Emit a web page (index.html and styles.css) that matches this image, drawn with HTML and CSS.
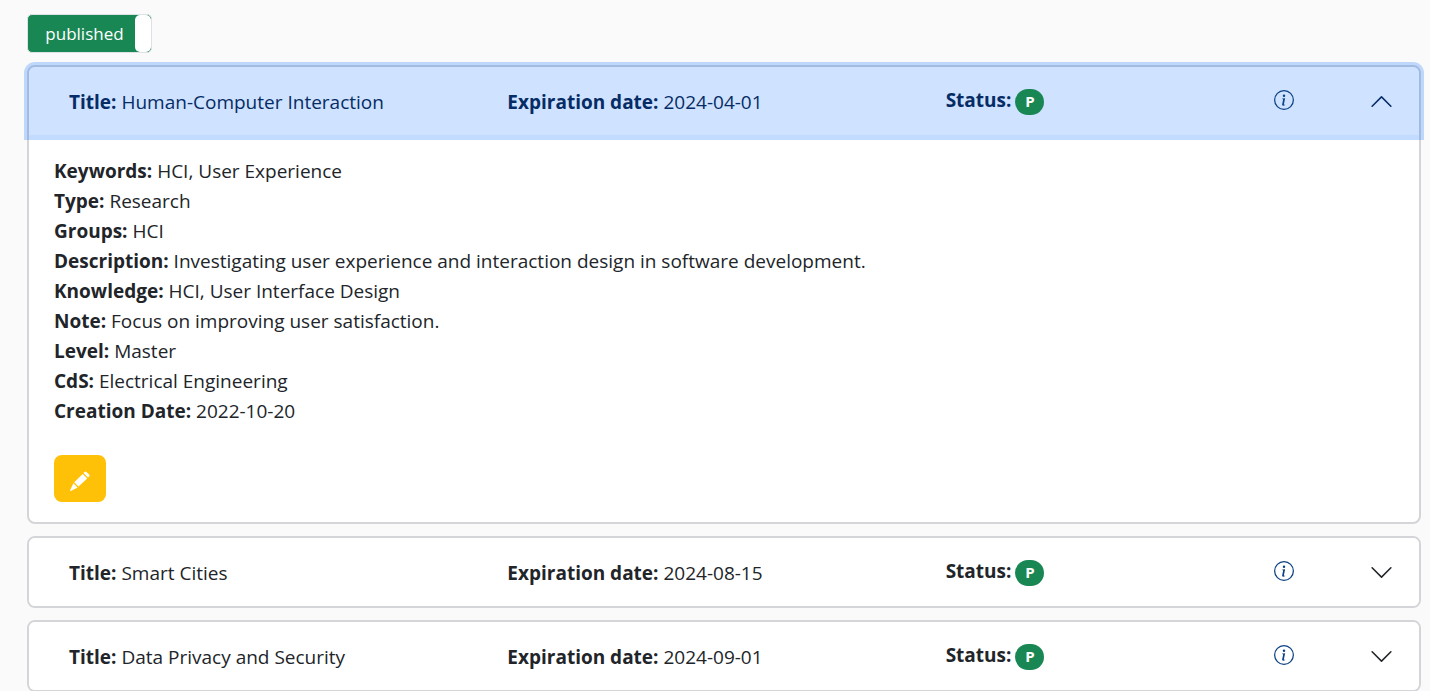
FILE: index.html
```html
<!DOCTYPE html>
<html lang="en">
<head>
<meta charset="utf-8">
<title>Proposals</title>
<link rel="stylesheet" href="styles.css">
</head>
<body>
<svg class="sprite" aria-hidden="true">
  <symbol id="info" viewBox="0 0 16 16">
    <path d="M8 15A7 7 0 1 1 8 1a7 7 0 0 1 0 14m0 1A8 8 0 1 0 8 0a8 8 0 0 0 0 16"/>
    <path d="m8.930 6.588-2.290.287-.082.380.450.083c.294.070.352.176.288.469l-.738 3.468c-.194.897.105 1.319.808 1.319.545 0 1.178-.252 1.465-.598l.088-.416c-.200.176-.492.246-.686.246-.275 0-.375-.193-.304-.533zM9 4.500a1 1 0 1 1-2 0 1 1 0 0 1 2 0"/>
  </symbol>
  <symbol id="chevron" viewBox="0 0 16 16">
    <path fill-rule="evenodd" d="M1.646 4.646a.5.5 0 0 1 .708 0L8 10.293l5.646-5.647a.5.5 0 0 1 .708.708l-6 6a.5.5 0 0 1-.708 0l-6-6a.5.5 0 0 1 0-.708"/>
  </symbol>
</svg>
<main class="page">
  <label class="toggle">
    <input class="toggle-input" type="checkbox" role="switch" checked>
    <span class="toggle-label">published</span>
    <span class="toggle-handle"></span>
  </label>
  <div class="accordion">
    <section class="card">
      <button class="card-header open" type="button" aria-expanded="true" aria-controls="details-1">
        <span class="row">
          <span class="col"><b>Title:</b> Human-Computer Interaction</span>
          <span class="col"><b>Expiration date:</b> 2024-04-01</span>
          <span class="col status"><b>Status:</b> <span class="badge">P</span></span>
          <span class="col info"><svg class="info-icon"><use href="#info"/></svg></span>
        </span>
        <svg class="chevron"><use href="#chevron"/></svg>
      </button>
      <div class="card-body" id="details-1">
        <div><b>Keywords:</b> HCI, User Experience</div>
        <div><b>Type:</b> Research</div>
        <div><b>Groups:</b> HCI</div>
        <div><b>Description:</b> Investigating user experience and interaction design in software development.</div>
        <div><b>Knowledge:</b> HCI, User Interface Design</div>
        <div><b>Note:</b> Focus on improving user satisfaction.</div>
        <div><b>Level:</b> Master</div>
        <div><b>CdS:</b> Electrical Engineering</div>
        <div><b>Creation Date:</b> 2022-10-20</div>
        <button class="edit" type="button" aria-label="Edit">
          <svg class="pencil" viewBox="0 0 20 20"><path d="M14.600.900Q15.500 0 16.400.900L19.100 3.600Q20 4.500 19.100 5.400L18 6.500 13.500 2zM12.700 2.900l4.500 4.500-8.700 8.200-4.300-4.300zM3.400 12.200l4.200 4.200L.900 19.900Q0 20.200.200 19.100z"/></svg>
        </button>
      </div>
    </section>
    <section class="card">
      <button class="card-header" type="button" aria-expanded="false">
        <span class="row">
          <span class="col"><b>Title:</b> Smart Cities</span>
          <span class="col"><b>Expiration date:</b> 2024-08-15</span>
          <span class="col status"><b>Status:</b> <span class="badge">P</span></span>
          <span class="col info"><svg class="info-icon"><use href="#info"/></svg></span>
        </span>
        <svg class="chevron"><use href="#chevron"/></svg>
      </button>
    </section>
    <section class="card">
      <button class="card-header" type="button" aria-expanded="false">
        <span class="row">
          <span class="col"><b>Title:</b> Data Privacy and Security</span>
          <span class="col"><b>Expiration date:</b> 2024-09-01</span>
          <span class="col status"><b>Status:</b> <span class="badge">P</span></span>
          <span class="col info"><svg class="info-icon"><use href="#info"/></svg></span>
        </span>
        <svg class="chevron"><use href="#chevron"/></svg>
      </button>
    </section>
  </div>
</main>
</body>
</html>
```
FILE: styles.css
```css
* { box-sizing: border-box; }

html { overflow: hidden; }

body {
  margin: 0;
  background: #fafafa;
  color: #212529;
  font-family: "Segoe UI", "Open Sans", "Noto Sans", sans-serif;
  font-size: 19px;
  line-height: 30px;
}

.sprite { position: absolute; width: 0; height: 0; }

.page { padding: 14px 9px 0 27px; }

.toggle {
  display: flex;
  width: 125px;
  height: 39px;
  border: 1px solid #dee2e6;
  border-radius: 5px;
  background: #198754;
  color: #fff;
  font-size: 17px;
  line-height: 37px;
  overflow: hidden;
}

.toggle-input {
  position: absolute;
  opacity: 0;
}

.toggle-label { flex: 1; padding-left: 6px; text-align: center; }

.toggle-handle {
  width: 16px;
  border-radius: 5px;
  background: #fff;
}

.accordion {
  display: flex;
  flex-direction: column;
  gap: 12px;
  margin-top: 12px;
}

.card {
  border: 2px solid #d3d5d8;
  border-radius: 8px;
  background: #fff;
}

.card-header {
  display: flex;
  align-items: center;
  width: 100%;
  padding: 20px 25px 18px;
  border: 0;
  border-radius: 6px;
  background: #fff;
  color: #212529;
  font: inherit;
  text-align: left;
}

.card-header.open {
  position: relative;
  border-radius: 6px 6px 0 0;
  background: #cfe2ff;
  color: #052c65;
  box-shadow: 0 0 0 5px rgba(13, 110, 253, 0.25);
}

.row {
  display: grid;
  flex: 1;
  grid-template-columns: 4fr 4fr 3fr 1fr;
}

.col { min-width: 0; padding-left: 15px; }

.status {
  display: flex;
  gap: 4px;
  height: 30px;
  line-height: 26px;
}

.badge {
  width: 29px;
  height: 26px;
  margin-top: 2px;
  border-radius: 13px;
  background: #198754;
  color: #fff;
  font-size: 15px;
  font-weight: 700;
  line-height: 25px;
  text-align: center;
}

.info-icon {
  display: block;
  width: 20px;
  height: 20px;
  margin-top: 3px;
  fill: #0a4286;
}

.chevron {
  width: 25px;
  height: 25px;
  margin-bottom: 2px;
  fill: currentColor;
}

.open .chevron { transform: rotate(180deg); }

.card-body { padding: 21px 25px 20px; }

.edit {
  display: flex;
  align-items: center;
  justify-content: center;
  width: 52px;
  height: 47px;
  margin-top: 29px;
  padding: 4px 0 0;
  border: 0;
  border-radius: 8px;
  background: #ffc107;
}

.pencil { width: 20px; height: 20px; fill: #fff; }
```
